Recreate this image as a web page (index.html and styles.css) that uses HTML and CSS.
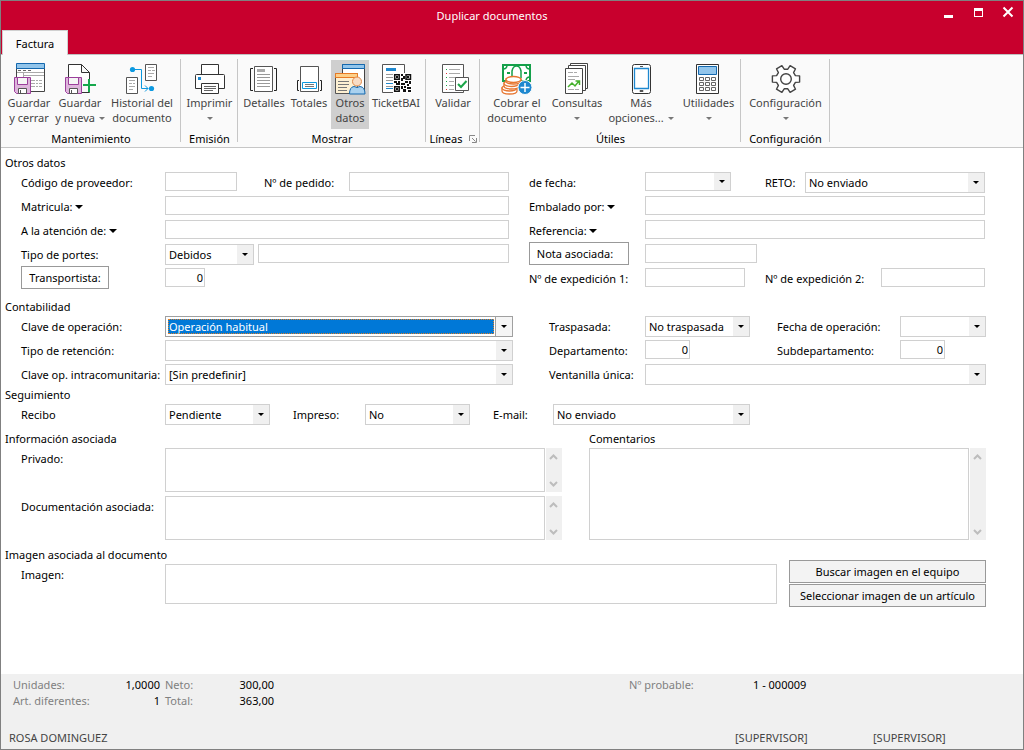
FILE: index.html
```html
<!DOCTYPE html>
<html lang="es">
<head>
<meta charset="utf-8">
<meta name="viewport" content="width=device-width, initial-scale=1">
<title>Duplicar documentos</title>
<link rel="stylesheet" href="styles.css">
</head>
<body>
<div class="window">
  <header class="titlebar">
    <h1 class="title">Duplicar documentos</h1>
    <div class="controls">
      <button type="button" aria-label="Minimizar"><svg width="12" height="12" viewBox="0 0 12 12"><path fill="#fff" d="M2 9h9v3H2z"/></svg></button>
      <button type="button" aria-label="Maximizar"><svg width="12" height="12" viewBox="0 0 12 12"><path fill="#fff" fill-rule="evenodd" d="M2 2h9v9H2zM3 5v5h7V5z"/></svg></button>
      <button type="button" aria-label="Cerrar"><svg width="12" height="12" viewBox="0 0 12 12"><path stroke="#fff" stroke-width="2" d="M1.500 1.500l9 9M10.500 1.500l-9 9"/></svg></button>
    </div>
    <nav class="tabs"><a class="tab" href="#factura">Factura</a></nav>
  </header>

  <div class="ribbon" id="factura">
    <section class="group">
      <div class="tools">
        <button type="button" class="tool w50">
          <svg class="icon" viewBox="0 0 32 32" fill="none">
            <path fill="#fff" stroke="#444" d="M3.500 1.500h28v27h-28z"/><path fill="#92c5eb" stroke="#1468ae" d="M3.500.5h28v5h-28z"/>
            <path stroke="#666" d="M5 7.500h3m2 0h3m2 0h3"/><path stroke="#aaa" d="M4 9.500h27M10.500 10v4M10 12.500h21M18 17.500h4m1 0h2m1 0h3M18 20.500h4m1 0h2m1 0h3M18 23.500h4m1 0h2m1 0h3"/>
            <path fill="#deb5dc" stroke="#9b3f9b" d="M1.500 14.500h16v16H3.500l-2-2z"/><path fill="#f5f5f5" stroke="#9b3f9b" d="M4.500 14.500h10v7h-10z"/><path fill="#fff" stroke="#555" d="M5.500 25.500h8v5h-8z"/><path stroke="#555" d="M7.500 27v3"/>
          </svg>
          <span>Guardar<br>y cerrar</span>
        </button>
        <button type="button" class="tool w52">
          <svg class="icon" viewBox="0 0 32 32" fill="none">
            <path fill="#fff" stroke="#333" d="M4.500 15V1.500h13l8 8V16M17.500 1.500v8h8M25.500 28v1.500H18"/>
            <path fill="#deb5dc" stroke="#9b3f9b" d="M1.500 14.500h16v16H3.500l-2-2z"/><path fill="#f5f5f5" stroke="#9b3f9b" d="M4.500 14.500h10v7h-10z"/><path fill="#fff" stroke="#555" d="M5.500 25.500h8v5h-8z"/><path stroke="#555" d="M7.500 27v3"/>
            <path stroke="#fafafa" stroke-width="5" d="M24.500 16v13M18 22.500h13"/><path stroke="#16a84c" stroke-width="2" d="M25 16v13M19 22h13"/>
          </svg>
          <span>Guardar<br>y nueva <i class="caret"></i></span>
        </button>
        <button type="button" class="tool w72">
          <svg class="icon" viewBox="0 0 32 32" fill="none">
            <path fill="#fff" stroke="#555" d="M19.500 1.500h11v16h-11zM.5 14.500h11v16H.5z"/>
            <path stroke="#aaa" d="M22 4.500h6m-6 3h3m1 0h3m-7 3h6m-6 3h4M3 17.500h6m-6 3h3m1 0h2m-6 3h6m-6 3h4"/>
            <path stroke="#0c99e0" d="M6 6.500h9.500v19H22M19 22.500l3 3-3 3"/><circle cx="6.500" cy="6.500" r="2.600" fill="#0c99e0"/><circle cx="25.500" cy="25.500" r="2.600" fill="#0c99e0"/>
          </svg>
          <span>Historial del<br>documento</span>
        </button>
      </div>
      <h2 class="caption">Mantenimiento</h2>
    </section>

    <section class="group">
      <div class="tools">
        <button type="button" class="tool w51">
          <svg class="icon" viewBox="0 0 32 32" fill="none">
            <path fill="#fff" stroke="#333" d="M7.500 12V1.500h17V12"/><path fill="#fff" stroke="#333" d="M1.500 12.500q0-1 1-1h27q1 0 1 1v13h-29z"/>
            <path fill="#fff" stroke="#333" d="M7.500 20.500h17v10h-17z"/><path stroke="#666" d="M10 23.500h12m-12 2h12m-12 2h9"/><path fill="#1e88cf" d="M4 14h3v3H4z"/>
          </svg>
          <span>Imprimir<br><i class="caret"></i></span>
        </button>
      </div>
      <h2 class="caption">Emisión</h2>
    </section>

    <section class="group">
      <div class="tools">
        <button type="button" class="tool w46">
          <svg class="icon" viewBox="0 0 32 32" fill="none">
            <path stroke="#222" d="M5 5.500H2.500v22H5M26 5.500h2.500v22H26"/><path fill="#fff" stroke="#555" d="M6.500 3.500h18v25h-18z"/><path fill="#aaa" d="M9 6h8v3H9z"/>
            <path stroke="#999" d="M9 11.500h13m-13 3h13m-13 3h13m-13 3h13m-13 3h13"/>
          </svg>
          <span>Detalles</span>
        </button>
        <button type="button" class="tool w44">
          <svg class="icon" viewBox="0 0 32 32" fill="none">
            <path stroke="#222" d="M6 17.500H4.500v10H6M27 17.500h1.500v10H27"/><path fill="#fff" stroke="#555" d="M7.500 3.500h18v25h-18z"/>
            <path fill="#fff" stroke="#0c99e0" d="M9.500 19.500h14v6h-14z"/><path stroke="#777" d="M12 21.500h9m-9 2h9"/>
          </svg>
          <span>Totales</span>
        </button>
        <button type="button" class="tool w38 active" aria-pressed="true">
          <svg class="icon" viewBox="0 0 32 32" fill="none">
            <path fill="#fff" stroke="#444" d="M8.500 1.500h22v26h-22z"/><path fill="#92c5eb" stroke="#1468ae" d="M8.500 1.500h22v4h-22z"/>
            <path fill="#fdf0d2" stroke="#555" d="M1.500 10.500h22v20h-22z"/><path fill="#fdd089" stroke="#e87b25" d="M1.500 10.500h22v4h-22z"/><path stroke="#777" d="M4 18.500h11m-11 3h11m-11 3h9m-9 3h9"/>
            <circle cx="23" cy="18.500" r="4.500" fill="#f9dcc4" stroke="#e08a4a"/><path fill="#a9d1ef" stroke="#1468ae" d="M15.500 31q0-7 4.500-7.500 3 2 6 0 5 .5 5 7.500z"/>
          </svg>
          <span>Otros<br>datos</span>
        </button>
        <button type="button" class="tool w54">
          <svg class="icon" viewBox="0 0 32 32" fill="none">
            <path fill="#fff" stroke="#555" d="M2.500 1.500h22v28h-22z"/><path fill="#1e88cf" d="M6 5h10v3H6z"/><path stroke="#999" d="M6 11.500h7m-7 3h7m-7 3h7m-7 6h7"/><path stroke="#1e88cf" d="M6 20.500h7m-7 5h7"/>
            <path fill="#fff" d="M13 10h19v20H13z"/><path stroke="#111" stroke-width="1.500" d="M14.700 11.700h4.500v4.500h-4.500zM26 11.700h4.500v4.500H26zM14.700 23.700h4.500v4.500h-4.500z"/>
            <path fill="#111" d="M16 13h2v2h-2zM27 13h2v2h-2zM16 25h2v2h-2zM21 11h2v2h-2zM23 13h2v3h-2zM21 15h2v3h-2zM14 18h3v2h-3zM18 18h2v2h-2zM16 20h4v2h-4zM21 20h4v2h-4zM25 18h3v2h-3zM29 18h2v3h-2zM27 21h2v2h-2zM21 23h2v3h-2zM24 23h2v2h-2zM27 24h4v2h-4zM23 26h3v3h-3zM28 27h3v2h-3z"/>
          </svg>
          <span>TicketBAI</span>
        </button>
      </div>
      <h2 class="caption">Mostrar</h2>
    </section>

    <section class="group">
      <div class="tools">
        <button type="button" class="tool w48">
          <svg class="icon" viewBox="0 0 32 32" fill="none">
            <path fill="#fff" stroke="#555" d="M5.500 1.500h21v28h-21z"/><path stroke="#aaa" d="M12 6.500h11m-11 4h11m-11 4h9m-9 4h5m-5 4h5m-5 4h5"/>
            <path stroke="#1ba548" d="M9 6.500h1m-1 8h1m-1 4h1m-1 4h1"/><path stroke="#d33" d="M9 10.500h1m-1 16h1"/>
            <path fill="#fff" stroke="#555" d="M18.500 14.500h13v13h-13z"/><path stroke="#1ba548" stroke-width="2" d="M21 21l3 3 5.500-6"/>
          </svg>
          <span>Validar</span>
        </button>
      </div>
      <h2 class="caption">Líneas <button type="button" class="launcher" aria-label="Opciones de líneas"><svg width="8" height="8" viewBox="0 0 8 8" fill="none" stroke="#888"><path d="M.5 6V.5H6M3 3l3.500 3.500M7.500 3v4.500H3"/></svg></button></h2>
    </section>

    <section class="group">
      <div class="tools">
        <button type="button" class="tool w68">
          <svg class="icon" viewBox="0 0 32 32" fill="none">
            <path fill="#fff" stroke="#14a04a" stroke-width="2" d="M2 2h27v16H2z"/><path stroke="#14a04a" stroke-width="1.500" d="M2 6q4 0 4-4M25 2q0 4 4 4M29 14q-4 0-4 4M11 15V8q1-5 4.500-5T20 8v7"/><path fill="#14a04a" d="M6 9h3v2H6zM23 9h3v2h-3z"/>
            <g fill="#fff" stroke="#e77732" stroke-width="1.300"><path d="M1 25v3c0 4 15 4 15 0v-3z"/><ellipse cx="8.500" cy="25" rx="7.500" ry="3"/><path d="M3 20v3c0 4 15 4 15 0v-3z"/><ellipse cx="10.500" cy="20.500" rx="7.500" ry="3"/><path d="M5 16v2c0 4 15 4 15 0v-2z"/><ellipse cx="12.500" cy="16.500" rx="7.500" ry="3"/></g>
            <circle cx="24" cy="24.500" r="7" fill="#1e88cf" stroke="#fafafa"/><path stroke="#fff" stroke-width="1.500" d="M19.500 24.500h9M24 20v9"/>
          </svg>
          <span>Cobrar el<br>documento</span>
        </button>
        <button type="button" class="tool w52">
          <svg class="icon" viewBox="0 0 32 32" fill="none" stroke="#444">
            <path fill="#fff" d="M9.500.5h17v25h-17z"/><path fill="#fff" d="M7.500 2.500h17v25h-17z"/><path fill="#fff" d="M4.500 5.500h17v25h-17z"/><path stroke="#aaa" d="M7 9.500h5m1 0h3m-9 4h11m-11 3h7m-7 10h6m1 0h4"/><path stroke="#45b02c" stroke-width="1.500" d="M7 24l4-4 3 3 4-5M14.500 18H18.500v4"/>
          </svg>
          <span>Consultas<br><i class="caret"></i></span>
        </button>
        <button type="button" class="tool w76">
          <svg class="icon" viewBox="0 0 32 32" fill="none">
            <rect x="7.500" y="1.500" width="18" height="29" rx="2" fill="#fff" stroke="#333"/><path fill="#fff" stroke="#1e88cf" stroke-width="1.300" d="M9.500 5.500h14v20h-14z"/><path stroke="#555" d="M15 3.500h3m-3 24h3v1h-3z"/>
          </svg>
          <span>Más<br>opciones... <i class="caret"></i></span>
        </button>
        <button type="button" class="tool w59">
          <svg class="icon" viewBox="0 0 32 32" fill="none">
            <path fill="#fff" stroke="#333" d="M3.500 1.500h22v29h-22z"/><path fill="#92c5eb" stroke="#1468ae" d="M5.500 3.500h18v8h-18z"/>
            <path stroke="#666" d="M6.500 14.500h4v3h-4zM12.500 14.500h4v3h-4zM18.500 14.500h4v3h-4zM6.500 19.500h4v3h-4zM12.500 19.500h4v3h-4zM18.500 19.500h4v3h-4zM6.500 24.500h4v3h-4zM12.500 24.500h4v3h-4zM18.500 24.500h4v3h-4z"/>
          </svg>
          <span>Utilidades<br><i class="caret"></i></span>
        </button>
      </div>
      <h2 class="caption">Útiles</h2>
    </section>

    <section class="group">
      <div class="tools">
        <button type="button" class="tool w83">
          <svg class="icon" viewBox="-16 -16 32 32" fill="#fff" stroke="#444" stroke-width="1.400" stroke-linejoin="round">
            <path d="M9.400-3.400L13.600-3.100V3.100L9.400 3.400 7.600 6.400 9.500 10.200 4.100 13.300 1.800 9.800H-1.800L-4.100 13.300-9.500 10.200-7.600 6.400-9.400 3.400-13.600 3.100V-3.100L-9.400-3.400-7.600-6.400-9.500-10.200-4.100-13.300-1.800-9.800H1.800L4.100-13.300 9.500-10.200 7.600-6.400z"/><circle r="5.300"/>
          </svg>
          <span>Configuración<br><i class="caret"></i></span>
        </button>
      </div>
      <h2 class="caption">Configuración</h2>
    </section>
  </div>

  <main class="form">
    <section class="block block-otros">
      <h2 class="heading">Otros datos</h2>
      <div class="rows">
        <div class="row">
          <label for="cod">Código de proveedor:</label>
          <div class="cell"><input id="cod" class="w72"><label class="lbl-pedido" for="ped">Nº de pedido:</label><input id="ped" class="grow"></div>
          <label class="second" for="fecha">de fecha:</label>
          <div class="cell"><div class="combo short w86"><select id="fecha"><option></option></select></div><label class="lbl-reto" for="reto">RETO:</label><div class="combo grow"><select id="reto"><option>No enviado</option></select></div></div>
        </div>
        <div class="row">
          <label for="mat">Matricula: <i class="caret dark"></i></label>
          <div class="cell"><input id="mat" class="grow"></div>
          <label class="second" for="emb">Embalado por: <i class="caret dark"></i></label>
          <div class="cell"><input id="emb" class="grow"></div>
        </div>
        <div class="row">
          <label for="ate">A la atención de: <i class="caret dark"></i></label>
          <div class="cell"><input id="ate" class="grow"></div>
          <label class="second" for="ref">Referencia: <i class="caret dark"></i></label>
          <div class="cell"><input id="ref" class="grow"></div>
        </div>
        <div class="row">
          <label for="por">Tipo de portes:</label>
          <div class="cell"><div class="combo w89"><select id="por"><option>Debidos</option></select></div><input class="grow" aria-label="Detalle de portes"></div>
          <div class="second"><button type="button" class="link-btn w100">Nota asociada:</button></div>
          <div class="cell"><input class="w112" aria-label="Nota asociada"></div>
        </div>
        <div class="row">
          <div><button type="button" class="link-btn w88">Transportista:</button></div>
          <div class="cell"><input class="w40 num" value="0" aria-label="Transportista"></div>
          <label class="second" for="ex1">Nº de expedición 1:</label>
          <div class="cell"><input id="ex1" class="w100"><label class="lbl-exp" for="ex2">Nº de expedición 2:</label><input id="ex2" class="grow"></div>
        </div>
      </div>
    </section>

    <section class="block">
      <h2 class="heading">Contabilidad</h2>
      <div class="rows">
        <div class="row conta">
          <label for="clave">Clave de operación:</label>
          <div class="cell"><div class="combo grow focused"><select id="clave"><option>Operación habitual</option></select></div></div>
          <label class="second" for="tras">Traspasada:</label>
          <div class="cell"><div class="combo w105"><select id="tras"><option>No traspasada</option></select></div><label class="lbl-sub" for="fop">Fecha de operación:</label><div class="combo grow"><select id="fop"><option></option></select></div></div>
        </div>
        <div class="row conta">
          <label for="ret">Tipo de retención:</label>
          <div class="cell"><div class="combo grow"><select id="ret"><option></option></select></div></div>
          <label class="second" for="dep">Departamento:</label>
          <div class="cell"><div class="w105"><input id="dep" class="w45 num" value="0"></div><label class="lbl-sub" for="sub">Subdepartamento:</label><input id="sub" class="w45 num" value="0"></div>
        </div>
        <div class="row conta">
          <label for="intra">Clave op. intracomunitaria:</label>
          <div class="cell"><div class="combo grow"><select id="intra"><option>[Sin predefinir]</option></select></div></div>
          <label class="second" for="ven">Ventanilla única:</label>
          <div class="cell"><div class="combo grow"><select id="ven"><option></option></select></div></div>
        </div>
      </div>
    </section>

    <section class="block block-seguimiento">
      <h2 class="heading">Seguimiento</h2>
      <div class="row single">
        <label for="rec">Recibo</label>
        <div class="cell"><div class="combo w105"><select id="rec"><option>Pendiente</option></select></div><label class="lbl-imp" for="imp">Impreso:</label><div class="combo w105"><select id="imp"><option>No</option></select></div><label class="lbl-mail" for="mail">E-mail:</label><div class="combo w197"><select id="mail"><option>No enviado</option></select></div></div>
      </div>
    </section>

    <section class="notes">
      <div>
        <h2 class="heading">Información asociada</h2>
        <div class="memos">
          <div class="row single">
            <label for="priv">Privado:</label>
            <div class="memo"><textarea id="priv"></textarea><div class="scroll"><svg width="9" height="6" viewBox="0 0 9 6"><path d="M1 5l3.500-3.500L8 5"/></svg><svg width="9" height="6" viewBox="0 0 9 6"><path d="M1 1l3.500 3.500L8 1"/></svg></div></div>
          </div>
          <div class="row single">
            <label for="docu">Documentación asociada:</label>
            <div class="memo"><textarea id="docu"></textarea><div class="scroll"><svg width="9" height="6" viewBox="0 0 9 6"><path d="M1 5l3.500-3.500L8 5"/></svg><svg width="9" height="6" viewBox="0 0 9 6"><path d="M1 1l3.500 3.500L8 1"/></svg></div></div>
          </div>
        </div>
      </div>
      <div class="comments">
        <label class="heading" for="com">Comentarios</label>
        <div class="memo"><textarea id="com"></textarea><div class="scroll"><svg width="9" height="6" viewBox="0 0 9 6"><path d="M1 5l3.500-3.500L8 5"/></svg><svg width="9" height="6" viewBox="0 0 9 6"><path d="M1 1l3.500 3.500L8 1"/></svg></div></div>
      </div>
    </section>

    <section class="image-block">
      <div>
        <h2 class="heading">Imagen asociada al documento</h2>
        <div class="row single">
          <label for="img">Imagen:</label>
          <input id="img" class="image-box">
        </div>
      </div>
      <div class="image-actions">
        <button type="button" class="action">Buscar imagen en el equipo</button>
        <button type="button" class="action">Seleccionar imagen de un artículo</button>
      </div>
    </section>
  </main>

  <footer class="footer">
    <div class="totals">
      <span class="dim">Unidades:</span><output>1,0000</output><span class="dim after">Neto:</span><output>300,00</output><span class="dim probable">Nº probable:</span><span>1 - 000009</span>
      <span class="dim">Art. diferentes:</span><output>1</output><span class="dim after">Total:</span><output>363,00</output>
    </div>
    <div class="status"><span>ROSA DOMINGUEZ</span><span>[SUPERVISOR]</span><span>[SUPERVISOR]</span></div>
  </footer>
</div>
</body>
</html>
```
FILE: styles.css
```css
* { box-sizing: border-box; }

body {
  margin: 0;
  font: 11px/15px "Noto Sans", "Open Sans", sans-serif;
  color: #000;
  background: #fff;
}

h1, h2 { margin: 0; font: inherit; }

button, input, select, textarea { font: inherit; color: inherit; margin: 0; border-radius: 0; }

button { padding: 0; cursor: pointer; }

.window {
  display: flex;
  flex-direction: column;
  min-height: 100vh;
  border: 1px solid #808080;
}

/* Title bar */
.titlebar {
  display: grid;
  grid-template-columns: minmax(0, 1fr) auto;
  background: #c8002d;
  border-bottom: 1px solid #c0c0c0;
}

.title {
  padding: 7px 0 0 50px;
  color: #fff;
  text-align: center;
}

.controls { display: flex; height: 29px; }

.controls button {
  display: flex;
  justify-content: center;
  width: 30px;
  padding-top: 5px;
  border: 0;
  background: none;
}

.tabs { grid-column: 1 / -1; display: flex; padding-left: 1px; margin-bottom: -1px; }

.tab {
  width: 66px;
  padding: 5px 0 4px;
  border: 1px solid #d0d0d0;
  border-bottom: 0;
  background: #fafafa;
  color: #000;
  text-align: center;
  text-decoration: none;
}

/* Ribbon */
.ribbon {
  display: flex;
  padding-top: 4px;
  background: #fafafa;
  border-bottom: 1px solid #c6c6c6;
}

.group {
  display: flex;
  flex-direction: column;
  padding: 1px 2px 0 3px;
  margin-bottom: 5px;
  border-right: 1px solid #c6c6c6;
}

.tools { display: flex; justify-content: center; }

.tool {
  display: flex;
  flex-direction: column;
  align-items: center;
  height: 69px;
  padding-top: 3px;
  border: 0;
  background: none;
  color: #444;
  white-space: nowrap;
}

.tool.active { background: #cfcfcf; }

.icon { width: 32px; height: 32px; flex: none; }

.caption {
  display: flex;
  align-items: center;
  justify-content: center;
  gap: 6px;
  height: 14px;
  margin: 2px 0 -3px;
}

.launcher { display: flex; align-self: flex-end; margin-bottom: 2px; border: 0; background: none; }

.caret {
  display: inline-block;
  margin-left: 1px;
  vertical-align: 2px;
  border: 3px solid transparent;
  border-top-color: #777;
  border-bottom: 0;
}

.caret.dark { border-width: 4px 4px 0; border-top-color: #000; margin-left: 0; }

/* Form */
.form { flex: 1; padding: 5px 37px 60px 4px; }

.heading { display: block; line-height: 19px; }

.block-otros { margin-bottom: 8px; padding-right: 1px; }
.block-seguimiento { margin-bottom: 4px; }

.rows { display: grid; gap: 3px; }

.row {
  display: grid;
  grid-template-columns: 144px minmax(0, 344fr) 136px minmax(0, 340fr);
  align-items: start;
  min-height: 21px;
  padding-left: 16px;
}

.row.conta { grid-template-columns: 144px minmax(0, 348fr) 132px minmax(0, 341fr); }
.row.single { grid-template-columns: 144px minmax(0, 1fr); }

.row label { line-height: 21px; white-space: nowrap; }

.second { padding-left: 20px; }
.conta .second { padding-left: 36px; }

.cell { display: flex; align-items: flex-start; gap: 4px; }
.cell > label { margin-right: -4px; }

.lbl-pedido { width: 108px; padding-left: 23px; }
.lbl-reto { width: 70px; padding-left: 30px; }
.lbl-exp { width: 132px; padding-left: 16px; }
.lbl-sub { width: 146px; padding-left: 23px; }
.lbl-imp { width: 91px; padding-left: 19px; }
.lbl-mail { width: 79px; padding-left: 19px; }

.grow { flex: 1; min-width: 0; }

input, textarea {
  border: 1px solid #d0d0d0;
  background: #fff;
  padding: 0 3px;
  outline: 0;
}

.cell input { height: 19px; }

.cell .num { padding: 0 1px 1px; text-align: right; }

.combo {
  position: relative;
  display: flex;
  height: 21px;
  border: 1px solid #d0d0d0;
}

.combo.short { height: 19px; }

.combo select {
  appearance: none;
  width: 100%;
  border: 0;
  padding: 0 20px 0 3px;
  background: #fff;
  outline: 0;
}

.combo::before {
  content: "";
  position: absolute;
  inset: 0 0 0 auto;
  width: 16px;
  background: #f0f0f0;
  pointer-events: none;
}

.combo::after {
  content: "";
  position: absolute;
  right: 5px;
  top: calc(50% - 2px);
  border: 3px solid transparent;
  border-top-color: #000;
  border-bottom: 0;
  pointer-events: none;
}

.combo.focused { padding: 2px 18px 2px 2px; border-color: #a0a0a0; }
.combo.focused::before { background: #f5f5f5; border-left: 1px solid #a0a0a0; }

.combo.focused select {
  padding: 0 1px;
  outline: 1px dotted #e08028;
  outline-offset: -1px;
  background: #0078d7;
  color: #fff;
}

.link-btn {
  display: block;
  height: 23px;
  margin: -2px 0 0;
  border: 1px solid #999;
  background: #fff;
}

.link-btn.w100 { padding-right: 8px; }

/* Notes */
.notes {
  display: grid;
  grid-template-columns: minmax(0, 557fr) minmax(0, 397fr);
  column-gap: 27px;
  margin-bottom: 5px;
}

.memos { display: grid; gap: 4px; }

.memo { display: flex; gap: 1px; height: 44px; }

.memo textarea { flex: 1; min-width: 0; resize: none; overflow: hidden; }

.scroll {
  display: flex;
  flex-direction: column;
  justify-content: space-between;
  align-items: center;
  width: 16px;
  padding: 6px 1px 5px 0;
  background: #f0f0f0;
}

.scroll path { fill: none; stroke: #bdbdbd; stroke-width: 2; }

.comments { display: flex; flex-direction: column; }
.comments .memo { flex: 1; }

/* Image */
.image-block {
  display: grid;
  grid-template-columns: minmax(0, 1fr) 197px;
  column-gap: 12px;
}

.image-box { height: 40px; }

.image-actions { display: grid; align-content: end; gap: 1px; margin-bottom: -3px; }

.action { height: 23px; border: 1px solid #999; background: #f3f3f3; white-space: nowrap; }

/* Footer */
.footer { padding: 3px 0 4px; background: #f0f0f0; }

.totals {
  display: grid;
  grid-template-columns: 87px 60px 36px 78px 1fr 270px;
  padding-left: 12px;
  line-height: 16px;
}

.totals output { text-align: right; }
.totals .after { padding-left: 5px; }
.totals .probable { justify-self: end; width: 124px; }

.dim { color: #808080; }

.status {
  display: grid;
  grid-template-columns: 1fr 138px 150px;
  padding: 21px 0 0 8px;
  color: #444;
}

/* Widths shared by tools and fields */
.w38 { width: 38px; }
.w40 { width: 40px; }
.w44 { width: 44px; }
.w45 { width: 45px; }
.w46 { width: 46px; }
.w48 { width: 48px; }
.w50 { width: 50px; }
.w51 { width: 51px; }
.w52 { width: 52px; }
.w54 { width: 54px; }
.w59 { width: 59px; }
.w68 { width: 68px; }
.w72 { width: 72px; }
.w76 { width: 76px; }
.w83 { width: 83px; }
.w86 { width: 86px; }
.w88 { width: 88px; }
.w89 { width: 89px; }
.w100 { width: 100px; }
.w105 { width: 105px; }
.w112 { width: 112px; }
.w197 { width: 197px; }
```
